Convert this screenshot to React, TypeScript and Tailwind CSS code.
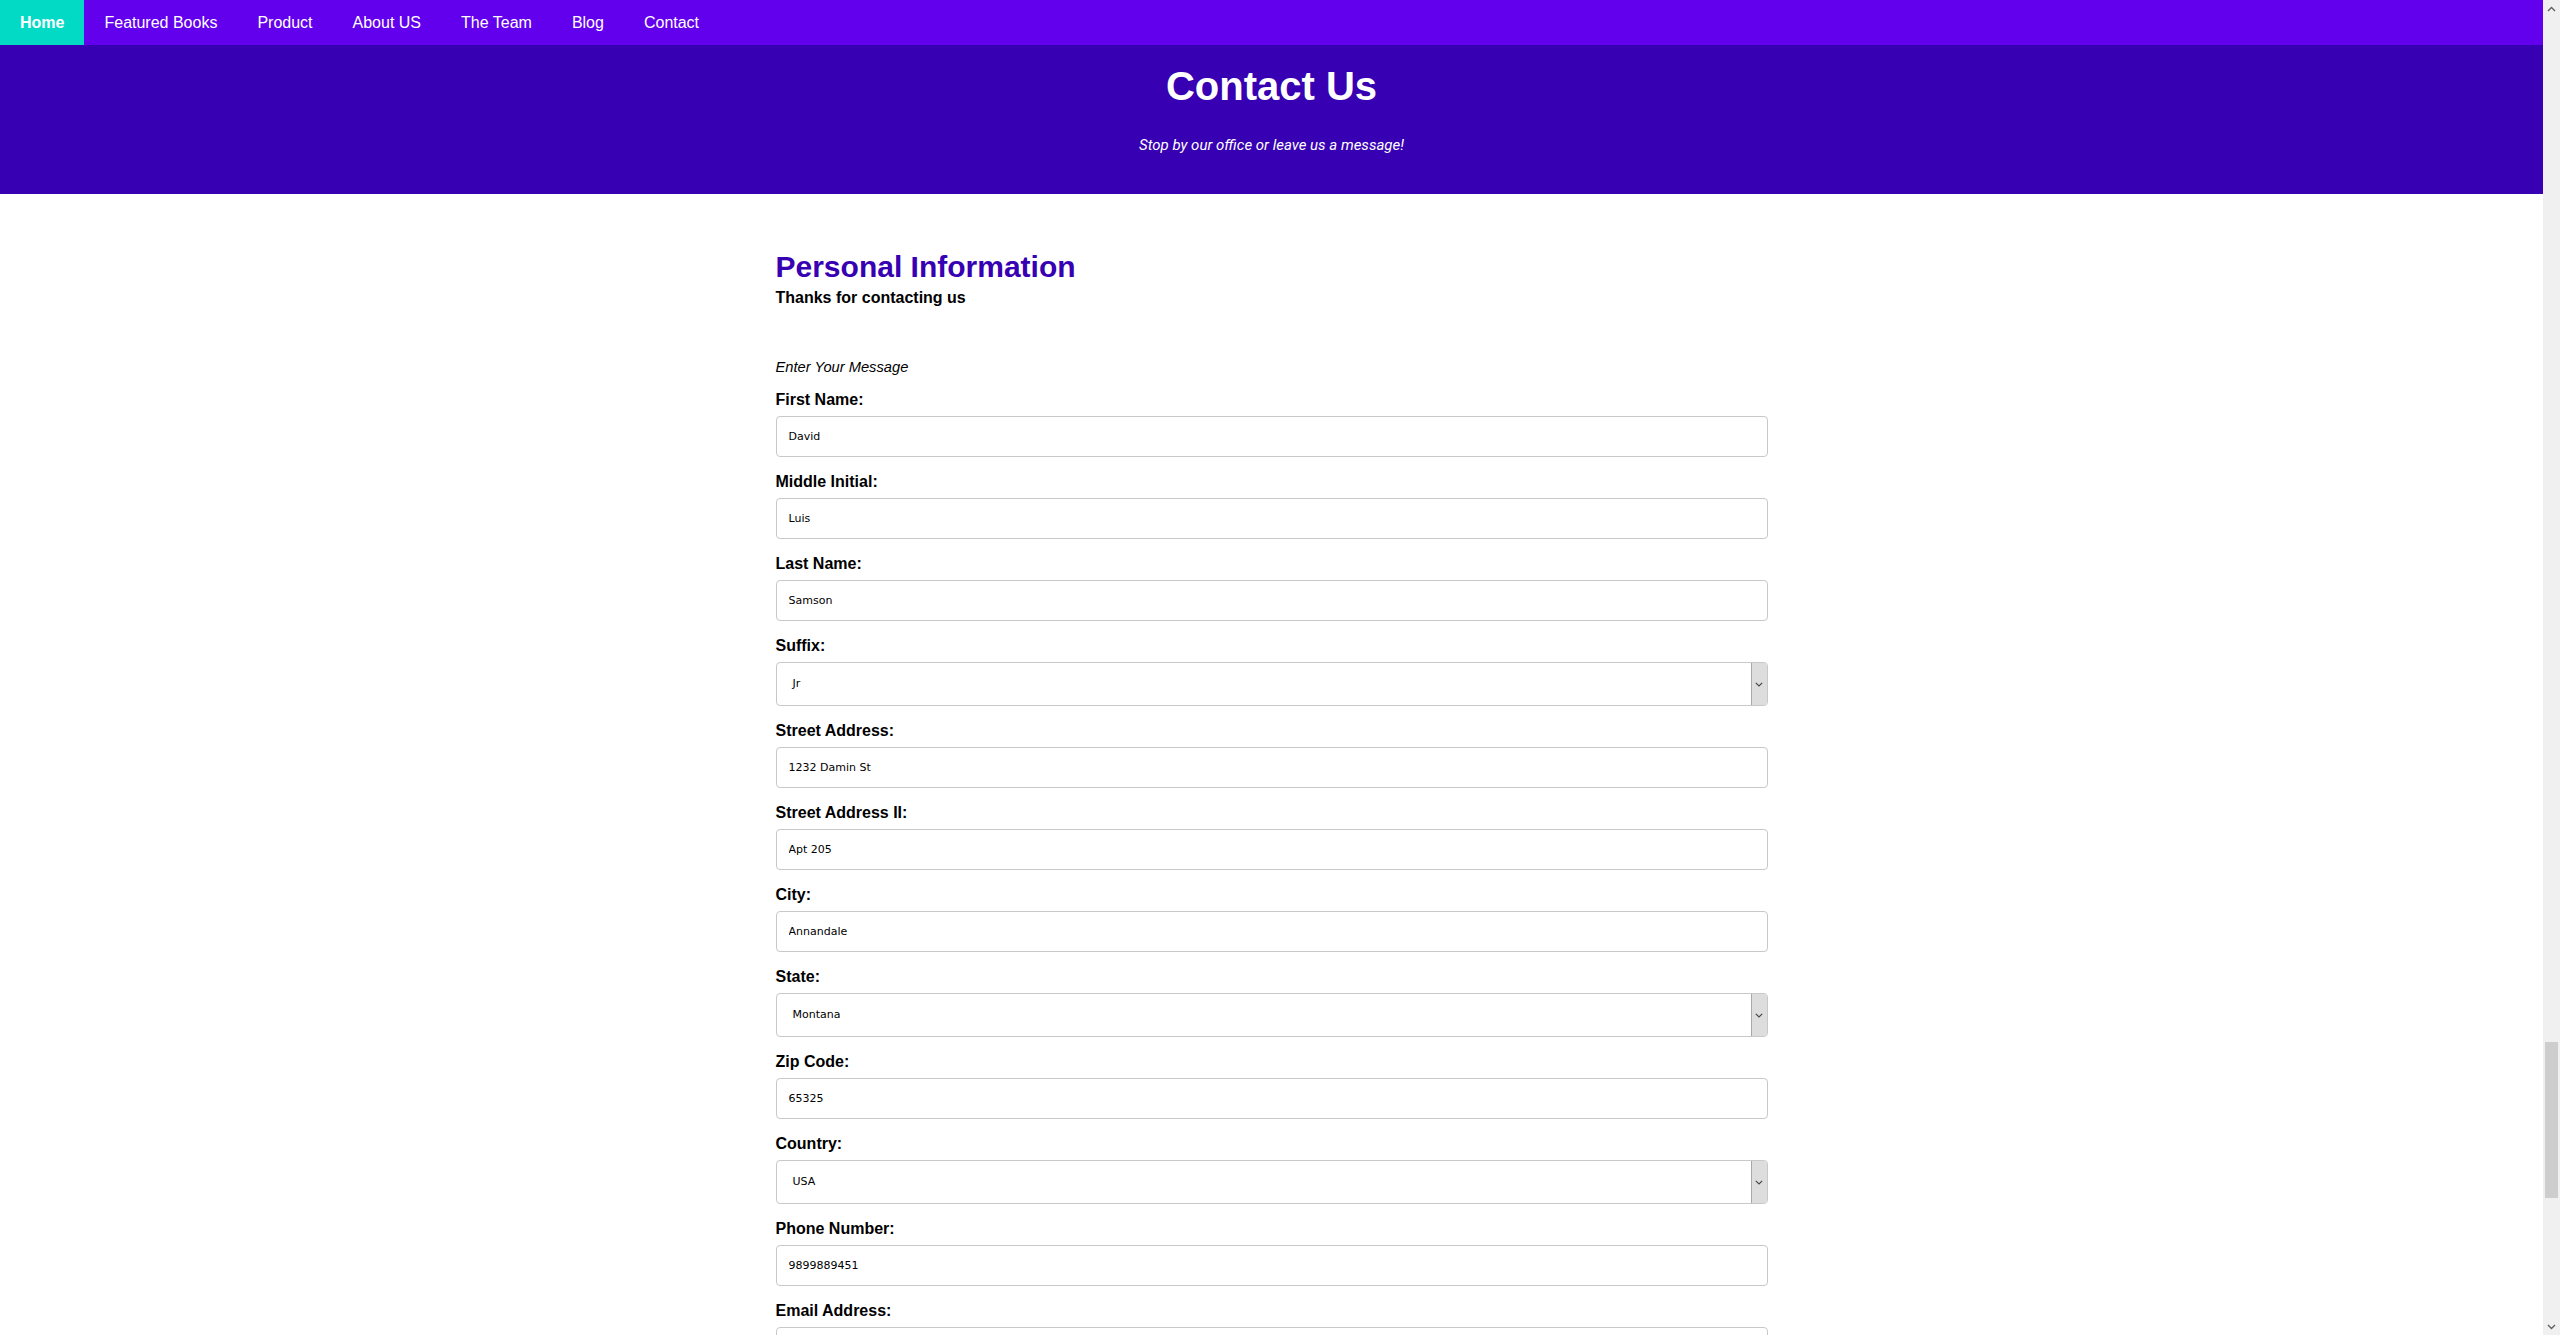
import React from "react";

type Field = { label: string; value: string; select?: boolean };

const fields: Field[] = [
  { label: "First Name:", value: "David" },
  { label: "Middle Initial:", value: "Luis" },
  { label: "Last Name:", value: "Samson" },
  { label: "Suffix:", value: "Jr", select: true },
  { label: "Street Address:", value: "1232 Damin St" },
  { label: "Street Address II:", value: "Apt 205" },
  { label: "City:", value: "Annandale" },
  { label: "State:", value: "Montana", select: true },
  { label: "Zip Code:", value: "65325" },
  { label: "Country:", value: "USA", select: true },
  { label: "Phone Number:", value: "9899889451" },
  { label: "Email Address:", value: "" },
];

const navItems = ["Featured Books", "Product", "About US", "The Team", "Blog", "Contact"];

function Chevron({ up }: { up?: boolean }) {
  return (
    <svg width="9" height="6" viewBox="0 0 9 6" className="block">
      <path
        d={up ? "M1 5 L4.5 1.5 L8 5" : "M1 1 L4.5 4.5 L8 1"}
        fill="none"
        stroke="#606060"
        strokeWidth="1.4"
      />
    </svg>
  );
}

function SelectBox({ value }: { value: string }) {
  return (
    <div className="flex h-[44px] w-full overflow-hidden rounded-[4px] border border-[#c8c8c8] bg-white">
      <div className="flex flex-1 items-center pl-[16px] font-['DejaVu_Sans',sans-serif] text-[11px] text-black">
        {value}
      </div>
      <div className="flex w-[16px] items-center justify-center border-l border-[#a8a8a8] bg-[#dddddd]">
        <svg width="8" height="5" viewBox="0 0 8 5" className="block">
          <path d="M0.8 0.8 L4 4 L7.2 0.8" fill="none" stroke="#4a4a4a" strokeWidth="1.2" />
        </svg>
      </div>
    </div>
  );
}

function InputBox({ value }: { value: string }) {
  return (
    <input
      readOnly
      value={value}
      className="block h-[41px] w-full rounded-[4px] border border-[#c8c8c8] bg-white px-[12px] font-['DejaVu_Sans',sans-serif] text-[11px] text-black outline-none"
    />
  );
}

export default function App() {
  return (
    <div className="flex h-[1335px] w-[2560px] overflow-hidden bg-white font-['Liberation_Sans',Arial,sans-serif] text-black">
      <div className="flex min-w-0 flex-1 flex-col">
        <nav className="flex h-[45px] shrink-0 items-stretch bg-[#6200ee] text-[16px] text-white">
          <a className="flex items-center bg-[#03dac6] px-5 font-bold">Home</a>
          {navItems.map((n) => (
            <a key={n} className="flex items-center px-5">
              {n}
            </a>
          ))}
        </nav>
        <header className="h-[149px] shrink-0 bg-[#3700b3] pt-[18px] text-center text-white">
          <h1 className="text-[40px] font-bold leading-[46px]">Contact Us</h1>
          <p className="mt-[27px] font-['Roboto',sans-serif] text-[15px] italic leading-[18px]">
            Stop by our office or leave us a message!
          </p>
        </header>
        <main className="mx-auto w-[992px] shrink-0">
          <h2 className="mt-[56px] text-[30px] font-bold leading-[34px] text-[#3700b3]">
            Personal Information
          </h2>
          <p className="mt-[5px] text-[16px] font-bold leading-[18px]">Thanks for contacting us</p>
          <p className="mt-[52px] text-[14.7px] italic leading-[17px]">Enter Your Message</p>
          <div className="mt-[15px] flex flex-col gap-[16px]">
            {fields.map((f) => (
              <div key={f.label} className="flex flex-col gap-[7px]">
                <label className="text-[16px] font-bold leading-[18px]">{f.label}</label>
                {f.select ? <SelectBox value={f.value} /> : <InputBox value={f.value} />}
              </div>
            ))}
          </div>
        </main>
      </div>
      <div className="flex w-[17px] shrink-0 flex-col bg-[#f0f0f0]">
        <div className="flex h-[17px] items-center justify-center">
          <Chevron up />
        </div>
        <div className="h-[1025px]" />
        <div className="mx-[2px] h-[156px] bg-[#cdcdcd]" />
        <div className="flex-1" />
        <div className="flex h-[17px] items-center justify-center">
          <Chevron />
        </div>
      </div>
    </div>
  );
}
